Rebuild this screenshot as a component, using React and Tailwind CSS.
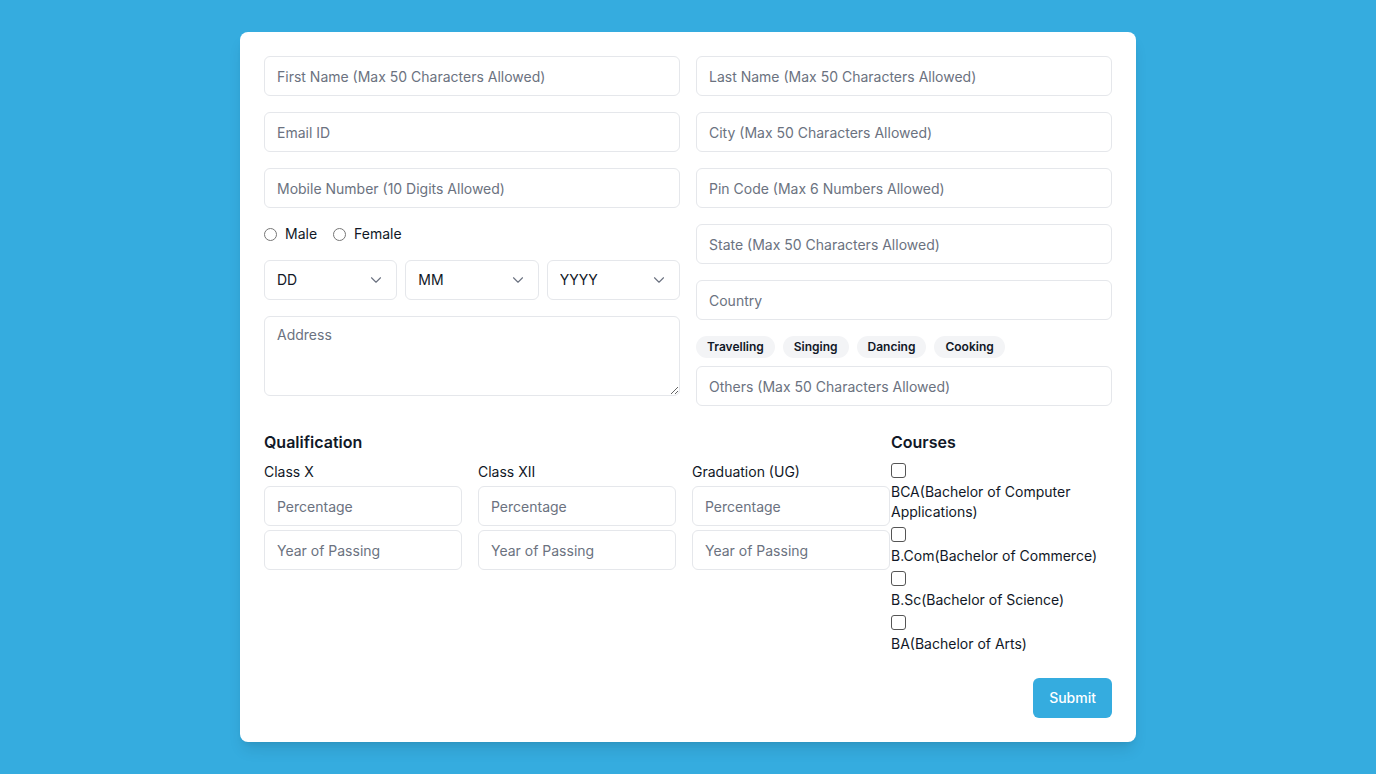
import React from "react";
import { ChevronDown } from "lucide-react";

const inputCls =
  "h-10 w-full rounded-md border border-[#e5e7eb] bg-white px-3 text-sm text-[#111827] placeholder:text-[#6b7280] outline-none";

function Select({ label }) {
  return (
    <div className="relative flex-1">
      <select className="h-10 w-full appearance-none rounded-md border border-[#e5e7eb] bg-white px-3 text-sm text-[#111827] outline-none">
        <option>{label}</option>
      </select>
      <ChevronDown className="pointer-events-none absolute right-[12px] top-[11px] h-[18px] w-[18px] text-[#6b7280]" strokeWidth={1.5} />
    </div>
  );
}

export default function App() {
  const chips = ["Travelling", "Singing", "Dancing", "Cooking"];
  const quals = ["Class X", "Class XII", "Graduation (UG)"];
  const courses = [
    "BCA(Bachelor of Computer Applications)",
    "B.Com(Bachelor of Commerce)",
    "B.Sc(Bachelor of Science)",
    "BA(Bachelor of Arts)",
  ];
  return (
    <div className="flex min-h-screen justify-center bg-[#35acdf] py-8 font-['Inter',sans-serif] text-[#111827]">
      <div className="w-[896px] rounded-lg bg-white p-6 shadow-lg">
        <div className="grid grid-cols-2 gap-x-4">
          <div className="flex flex-col gap-4">
            <input className={inputCls} placeholder="First Name (Max 50 Characters Allowed)" />
            <input className={inputCls} placeholder="Email ID" />
            <input className={inputCls} placeholder="Mobile Number (10 Digits Allowed)" />
            <div className="flex h-5 items-center gap-4 text-sm">
              <label className="flex items-center gap-2">
                <input type="radio" name="g" className="m-0 h-[13px] w-[13px]" />
                Male
              </label>
              <label className="flex items-center gap-2">
                <input type="radio" name="g" className="m-0 h-[13px] w-[13px]" />
                Female
              </label>
            </div>
            <div className="flex gap-2">
              <Select label="DD" />
              <Select label="MM" />
              <Select label="YYYY" />
            </div>
            <textarea
              className="h-20 w-full rounded-md border border-[#e5e7eb] px-3 py-2 text-sm placeholder:text-[#6b7280] outline-none"
              placeholder="Address"
            />
          </div>
          <div className="flex flex-col gap-4">
            <input className={inputCls} placeholder="Last Name (Max 50 Characters Allowed)" />
            <input className={inputCls} placeholder="City (Max 50 Characters Allowed)" />
            <input className={inputCls} placeholder="Pin Code (Max 6 Numbers Allowed)" />
            <input className={inputCls} placeholder="State (Max 50 Characters Allowed)" />
            <input className={inputCls} placeholder="Country" />
            <div className="flex flex-col gap-2">
              <div className="flex gap-2">
                {chips.map((c) => (
                  <span
                    key={c}
                    className="flex h-[22px] items-center rounded-full bg-[#f3f4f6] px-[11px] text-xs font-semibold text-[#111827]"
                  >
                    {c}
                  </span>
                ))}
              </div>
              <input className={inputCls} placeholder="Others (Max 50 Characters Allowed)" />
            </div>
          </div>
        </div>

        <div className="mt-6 flex">
          <div className="w-[626px] shrink-0">
            <h2 className="text-base font-semibold leading-6">Qualification</h2>
            <div className="mt-2 grid grid-cols-3 gap-x-4">
              {quals.map((q) => (
                <div key={q} className="flex flex-col">
                  <span className="mb-1 text-sm leading-5">{q}</span>
                  <div className="flex flex-col gap-1">
                    <input className={inputCls} placeholder="Percentage" />
                    <input className={inputCls} placeholder="Year of Passing" />
                  </div>
                </div>
              ))}
            </div>
          </div>
          <div className="flex-1 pl-px">
            <h2 className="text-base font-semibold leading-6">Courses</h2>
            <div className="mt-1 flex flex-col text-sm leading-5">
              {courses.map((c) => (
                <label key={c} className="block">
                  <div className="flex h-6 items-center">
                    <input
                      type="checkbox"
                      className="m-0 h-[15px] w-[15px] appearance-none rounded-[3px] border border-[#555555] bg-white"
                    />
                  </div>
                  <span className="block">{c}</span>
                </label>
              ))}
            </div>
          </div>
        </div>

        <div className="mt-6 flex justify-end">
          <button className="h-10 rounded-md bg-[#35acdf] px-4 text-sm font-medium text-white">
            Submit
          </button>
        </div>
      </div>
    </div>
  );
}
